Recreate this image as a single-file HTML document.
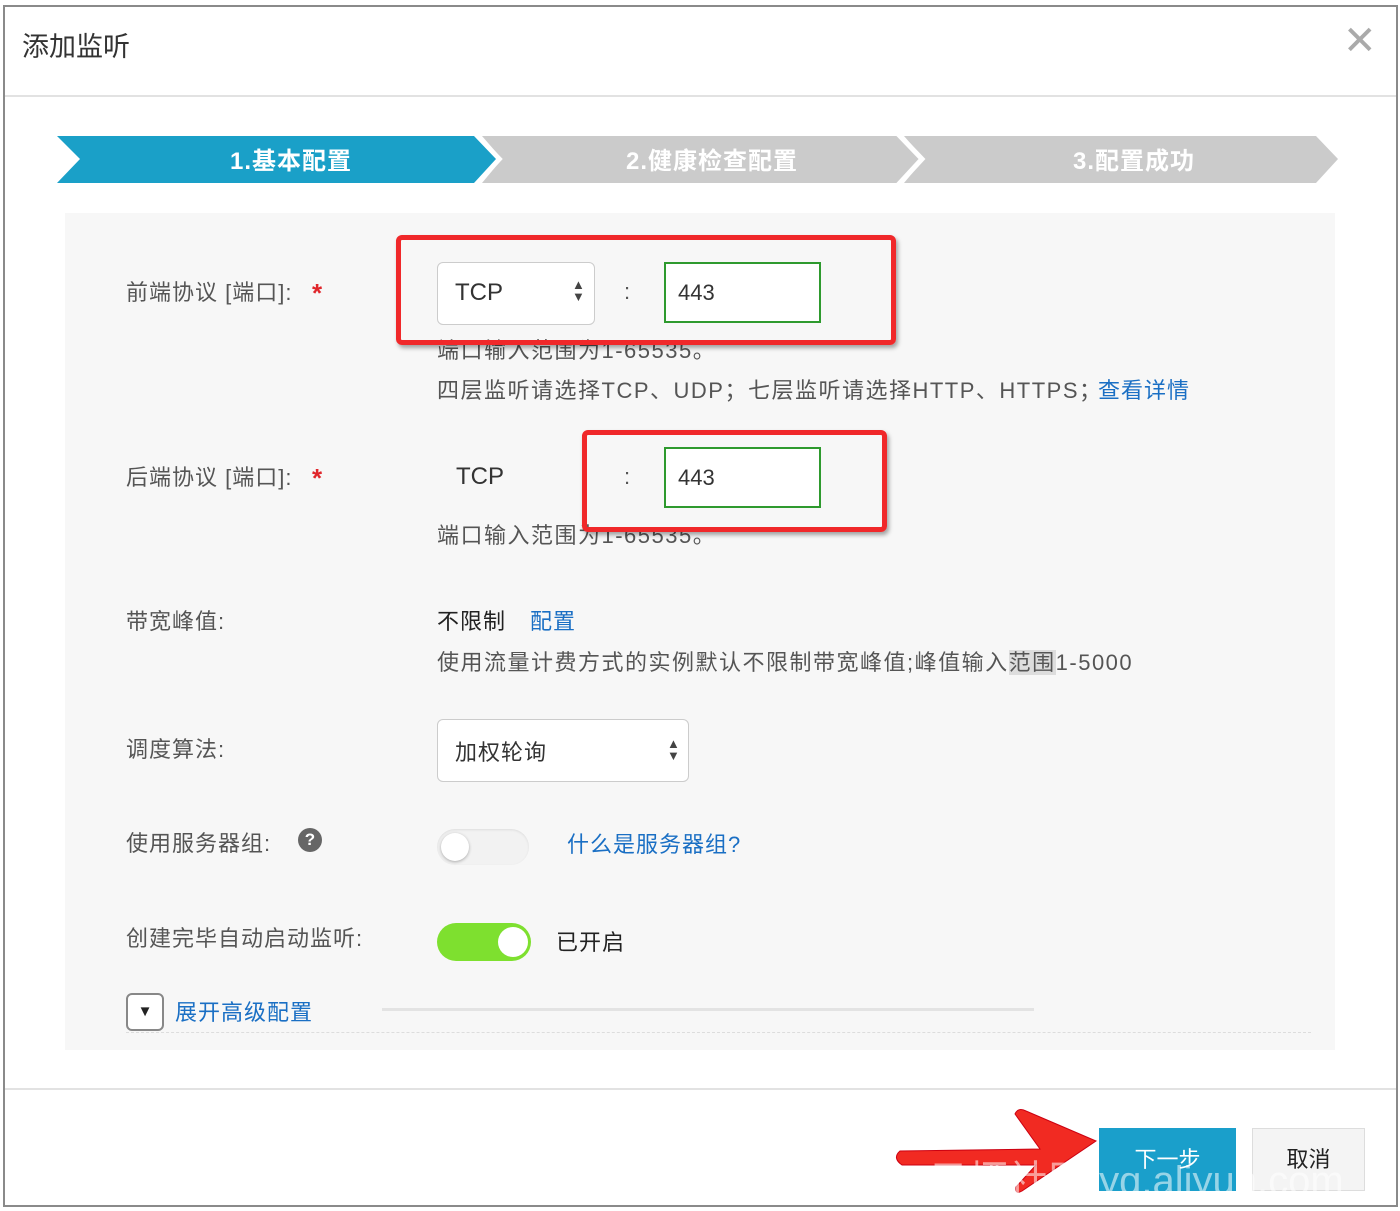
<!DOCTYPE html>
<html><head><meta charset="utf-8"><style>
body{margin:0;width:1400px;height:1211px;background:#fff;font-family:"Liberation Sans","Noto Sans CJK SC",sans-serif;position:relative;overflow:hidden;color:#333}
.a{position:absolute;white-space:nowrap}
.lbl{font-size:22px;color:#555;letter-spacing:1px}
.t{font-size:22px;color:#555;letter-spacing:1.5px}
.link{color:#1a6fc4;font-size:22px;letter-spacing:1px}
.star{color:#e0262b;font-size:26px;font-weight:bold}
.red{position:absolute;border:5px solid #f0282a;border-radius:6px;box-shadow:2px 3px 4px rgba(0,0,0,.35)}
</style></head><body>
<div class="a" style="left:3px;top:5px;width:1391px;height:1198px;border:2px solid #8a8a8a"></div>
<div class="a" style="left:22px;top:25px;font-size:27px;color:#333">添加监听</div>
<div class="a" style="left:1343px;top:18px;font-size:40px;color:#aaa;font-weight:300">✕</div>
<div class="a" style="left:5px;top:95px;width:1391px;height:2px;background:#e2e2e2"></div>
<svg class="a" style="left:0;top:0" width="1400" height="200">
<polygon points="904,136 1316,136 1338,159 1316,183 904,183 924,159" fill="#cbcbcb"/>
<polygon points="482,136 902,136 924,159 902,183 482,183 502,159" fill="#cbcbcb"/>
<polyline points="898,134 922,159 898,185" fill="none" stroke="#fff" stroke-width="5"/>
<polygon points="57,136 474,136 496,159 474,183 57,183 80,159" fill="#1aa0c8"/>
<polyline points="476,134 500,159 476,185" fill="none" stroke="#fff" stroke-width="4"/>
</svg>
<div class="a" style="left:230px;top:141px;font-size:24px;color:#fff;font-weight:bold;letter-spacing:1px">1.基本配置</div>
<div class="a" style="left:626px;top:141px;font-size:24px;color:#fff;font-weight:bold;letter-spacing:1px">2.健康检查配置</div>
<div class="a" style="left:1073px;top:141px;font-size:24px;color:#fff;font-weight:bold;letter-spacing:1px">3.配置成功</div>
<div class="a" style="left:65px;top:213px;width:1270px;height:837px;background:#f7f7f7"></div>

<div class="a lbl" style="left:126px;top:275px">前端协议 [端口]:</div><div class="a star" style="left:312px;top:278px">*</div>
<div class="a" style="left:437px;top:262px;width:156px;height:61px;background:#fff;border:1px solid #ccc;border-radius:6px"></div>
<div class="a" style="left:455px;top:279px;font-size:24px;color:#333">TCP</div>
<div class="a" style="left:572px;top:279px;font-size:13px;color:#444;line-height:12px">▲<br>▼</div>
<div class="a t" style="left:624px;top:279px">:</div>
<div class="a" style="left:664px;top:262px;width:157px;height:61px;background:#fff;border:2px solid #2e9a2e;box-sizing:border-box"></div>
<div class="a" style="left:678px;top:280px;font-size:22px;color:#333">443</div>
<div class="a t" style="left:437px;top:333px">端口输入范围为1-65535。</div>
<div class="red" style="left:396px;top:235px;width:490px;height:100px"></div>
<div class="a t" style="left:437px;top:373px">四层监听请选择TCP、UDP；七层监听请选择HTTP、HTTPS；</div>
<div class="a link" style="left:1098px;top:373px">查看详情</div>

<div class="a lbl" style="left:126px;top:460px">后端协议 [端口]:</div><div class="a star" style="left:312px;top:463px">*</div>
<div class="a" style="left:456px;top:463px;font-size:24px;color:#333">TCP</div>
<div class="a t" style="left:624px;top:464px">:</div>
<div class="a" style="left:664px;top:447px;width:157px;height:61px;background:#fff;border:2px solid #2e9a2e;box-sizing:border-box"></div>
<div class="a" style="left:678px;top:465px;font-size:22px;color:#333">443</div>
<div class="a t" style="left:437px;top:518px">端口输入范围为1-65535。</div>
<div class="red" style="left:582px;top:430px;width:295px;height:92px"></div>

<div class="a lbl" style="left:126px;top:604px">带宽峰值:</div>
<div class="a" style="left:437px;top:604px;font-size:22px;color:#222;letter-spacing:1px">不限制</div>
<div class="a link" style="left:530px;top:604px">配置</div>
<div class="a t" style="left:437px;top:645px">使用流量计费方式的实例默认不限制带宽峰值;峰值输入<span style="background:#ddd">范围</span>1-5000</div>

<div class="a lbl" style="left:126px;top:732px">调度算法:</div>
<div class="a" style="left:437px;top:719px;width:250px;height:61px;background:#fff;border:1px solid #ccc;border-radius:6px"></div>
<div class="a" style="left:455px;top:735px;font-size:22px;color:#333;letter-spacing:1px">加权轮询</div>
<div class="a" style="left:667px;top:738px;font-size:13px;color:#444;line-height:12px">▲<br>▼</div>

<div class="a lbl" style="left:126px;top:826px">使用服务器组:</div>
<div class="a" style="left:298px;top:828px;width:24px;height:24px;border-radius:50%;background:#666;color:#fff;font-size:17px;font-weight:bold;text-align:center;line-height:24px">?</div>
<div class="a" style="left:437px;top:829px;width:92px;height:36px;border-radius:18px;background:#f2f2f2;box-shadow:0 1px 2px #ddd inset"></div>
<div class="a" style="left:441px;top:833px;width:28px;height:28px;border-radius:50%;background:#fff;box-shadow:0 1px 3px rgba(0,0,0,.3)"></div>
<div class="a link" style="left:567px;top:827px">什么是服务器组?</div>

<div class="a lbl" style="left:126px;top:921px">创建完毕自动启动监听:</div>
<div class="a" style="left:437px;top:923px;width:94px;height:38px;border-radius:19px;background:#7ee02f"></div>
<div class="a" style="left:498px;top:927px;width:30px;height:30px;border-radius:50%;background:#fff"></div>
<div class="a" style="left:556px;top:925px;font-size:22px;color:#222;letter-spacing:1px">已开启</div>

<div class="a" style="left:126px;top:993px;width:38px;height:38px;border:2px solid #888;border-radius:6px;box-sizing:border-box;background:#fff;text-align:center;line-height:34px;font-size:15px;color:#222">▼</div>
<div class="a link" style="left:175px;top:995px">展开高级配置</div>
<div class="a" style="left:382px;top:1008px;width:652px;height:3px;background:#e3e3e3"></div>
<div class="a" style="left:126px;top:1032px;width:1185px;border-top:1px dashed #ddd"></div>

<div class="a" style="left:5px;top:1088px;width:1391px;height:2px;background:#e2e2e2"></div>
<div class="a" style="left:1099px;top:1128px;width:137px;height:63px;background:#1a9fcb;color:#fff;font-size:22px;text-align:center;line-height:63px">下一步</div>
<div class="a" style="left:1252px;top:1128px;width:113px;height:63px;background:#f4f4f4;border:1px solid #ddd;box-sizing:border-box;color:#222;font-size:22px;text-align:center;line-height:61px">取消</div>
<svg class="a" style="left:890px;top:1105px" width="220" height="95">
<path d="M10,46 L150,44 L125,9 Q128,2 136,6 L206,36 L132,86 Q125,90 126,82 L146,60 L12,60 Q2,53 10,46Z" fill="#f12a22" stroke="#c01" stroke-width="1"/>
</svg>
<div class="a" style="left:928px;top:1148px;font-size:40px;color:rgba(255,255,255,.55)">云栖社区 yq.aliyun.com</div>
</body></html>
